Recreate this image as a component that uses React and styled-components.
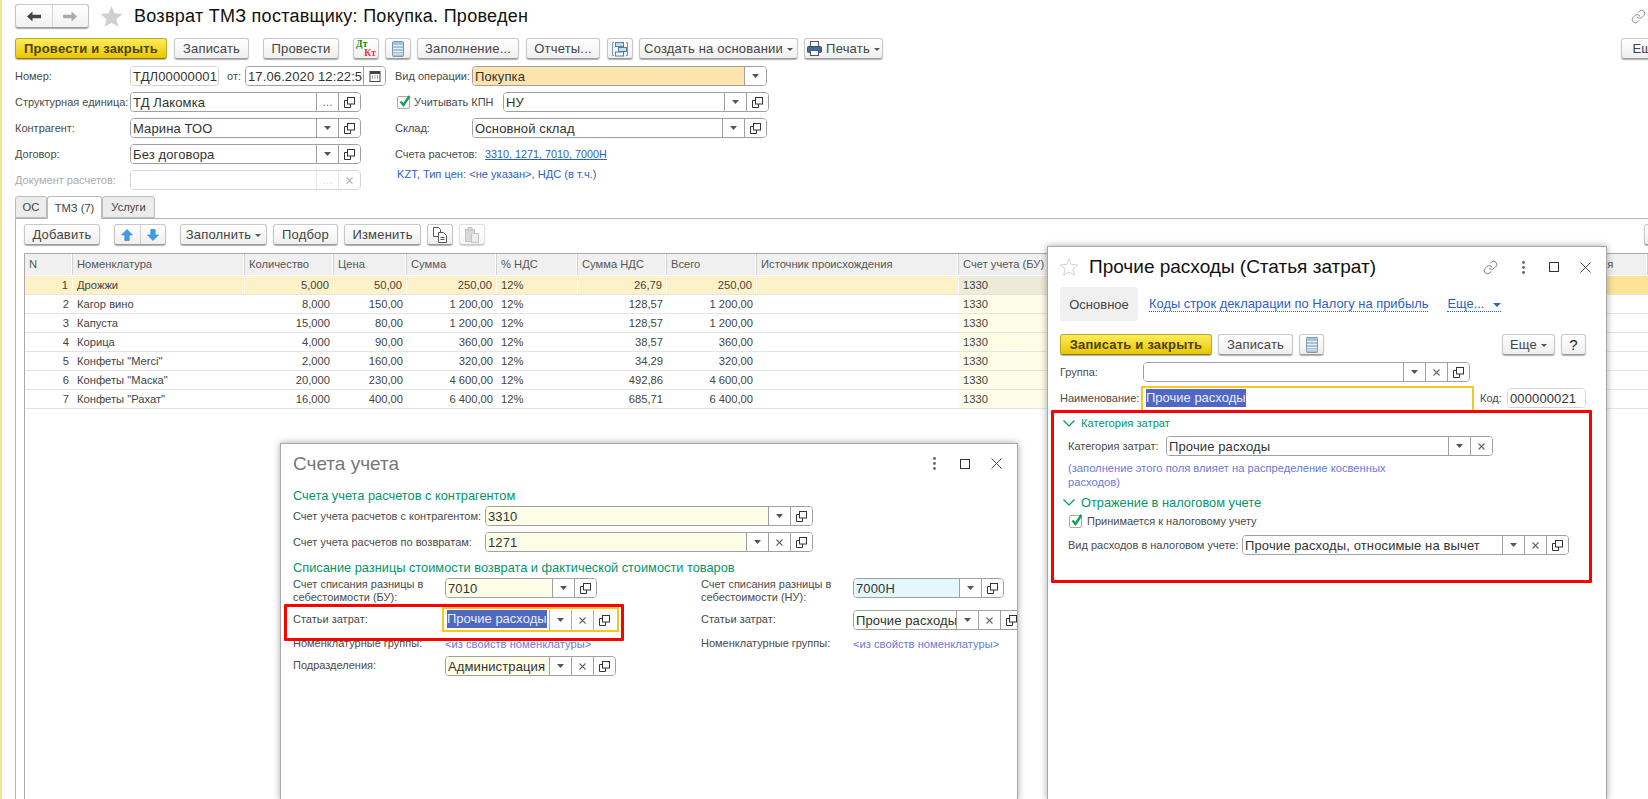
import React from 'react';
import styled, { createGlobalStyle } from 'styled-components';
import { Link as LinkIcon } from 'lucide-react';

const Global = createGlobalStyle`
html,body{margin:0;padding:0;background:#fff;}
body{font-family:"Liberation Sans",Arial,sans-serif;font-size:11.2px;color:#4a4a4a;overflow:hidden;}
`
const Page = styled.div`
position:relative;
width:1648px;
height:799px;
overflow:hidden;
box-sizing:border-box;
border-left:2px solid #f6e58e;
padding-left:13px;
display:flex;
flex-direction:column;
`
const TitleRow = styled.div`
display:flex;
align-items:center;
height:24px;
margin-top:4px;
`
const NavGroup = styled.div`
display:flex;
width:74px;
height:24px;
box-sizing:border-box;
border:1px solid #c6c6c6;
border-bottom-color:#9c9c9c;
border-radius:3px;
background:linear-gradient(#fff,#f1f1f1);
box-shadow:0 1px 1px #aaa;
`
const NavBtn = styled.div`
flex:1;
display:flex;
align-items:center;
justify-content:center;
& + &{border-left:1px solid #d6d6d6;}
`
const StarSlot = styled.div`
display:flex;
margin-left:11px;
`
const Title = styled.div`
font-size:18px;
letter-spacing:.27px;
color:#111;
margin-left:11px;
white-space:nowrap;
`
const CornerLink = styled.div`
margin-left:auto;
margin-right:2px;
display:flex;
color:#666;
`
const Toolbar = styled.div`
display:flex;
align-items:center;
height:21px;
margin-top:${p => p.$mt || 0}px;
flex:none;
`
const Button = styled.div`
flex:none;
box-sizing:border-box;
width:${p => p.$w}px;
height:21px;
margin-left:${p => p.$ml || 0}px;
display:flex;
align-items:center;
justify-content:center;
gap:4px;
border:1px solid #c8c8c8;
border-bottom-color:#9a9a9a;
border-radius:3px;
background:linear-gradient(#fff,#efefef);
box-shadow:0 1px 1px #b0b0b0;
font-size:13px;
letter-spacing:.2px;
color:#444;
white-space:nowrap;
opacity:${p => p.$off ? .55 : 1};
`
const MainButton = styled(Button)`
background:linear-gradient(#ffec5c,#e8c600);
border-color:#c0a820;
border-bottom-color:#8c7a10;
font-weight:bold;
color:#4c4200;
`
const ArrowGroup = styled(Button)`
gap:0;
padding:0;
`
const ArrowCell = styled.div`
flex:1;
height:100%;
display:flex;
align-items:center;
justify-content:center;
& + &{border-left:1px solid #d0d0d0;}
`
const Caret = styled.span`
display:inline-block;
width:0;
height:0;
border-left:3px solid transparent;
border-right:3px solid transparent;
border-top:3px solid #555;
margin-top:1px;
`
const DtKt = styled.div`
position:relative;
width:20px;
height:17px;
font-family:"Liberation Serif",serif;
font-weight:bold;
font-size:9.5px;
line-height:9px;
color:#0f8a00;
span{display:block;color:#f03030;text-align:right;}
`
const Form = styled.div`
display:flex;
margin-top:7px;
flex:none;
`
const FormCol = styled.div`
display:flex;
flex-direction:column;
gap:6px;
width:${p => p.$w ? p.$w + 'px' : 'auto'};
`
const Row = styled.div`
display:flex;
align-items:center;
height:20px;
margin-top:${p => p.$mt || 0}px;
flex:none;
`
const Label = styled.div`
flex:none;
width:${p => p.$w ? p.$w + 'px' : 'auto'};
margin-left:${p => p.$ml || 0}px;
font-size:11px;
line-height:13px;
color:${p => p.$off ? '#aaa' : '#4a4a4a'};
white-space:nowrap;
`
const FieldBox = styled.div`
flex:none;
box-sizing:border-box;
width:${p => p.$w}px;
height:20px;
display:flex;
margin-left:${p => p.$ml || 0}px;
border:1px solid ${p => p.$light ? '#d4d4d4' : '#a0a0a0'};
border-radius:4px;
overflow:hidden;
background:#fff;
`
const FieldValue = styled.div`
flex:1;
min-width:0;
padding:1px 2px 0;
font-size:13px;
letter-spacing:.12px;
line-height:18px;
color:#333;
white-space:nowrap;
overflow:hidden;
background:${p => p.$bg || '#fff'};
`
const FieldBtn = styled.div`
flex:none;
width:21px;
display:flex;
align-items:center;
justify-content:center;
border-left:1px solid ${p => p.$light ? '#d4d4d4' : '#a0a0a0'};
font-size:12px;
line-height:18px;
color:${p => p.$light ? '#bbb' : '#777'};
background:#fff;
opacity:${p => p.$light ? .5 : 1};
`
const Focus = styled.div`
flex:none;
box-sizing:border-box;
border:2px solid #fbc51f;
width:${p => p.$w}px;
height:${p => p.$h}px;
margin:${p => p.$m};
padding:1px 2px 0 3px;
display:flex;
font-size:13px;
line-height:18px;
color:#333;
background:#fff;
`
const Selected = styled.span`
background:#5068c0;
color:#e8ecff;
height:18px;
white-space:nowrap;
`
const FocusSpacer = styled.div`
flex:1;
`
const FocusBtn = styled(FieldBtn)`
border-left:1px solid #b0b0b0;
`
const TextLink = styled.a`
color:#2a60c8;
text-decoration:underline;
font-size:10.8px;
margin-left:${p => p.$ml || 0}px;
white-space:nowrap;
`
const BlueText = styled.div`
color:#3060c8;
font-size:11.1px;
margin-left:${p => p.$ml || 0}px;
white-space:nowrap;
`
const CheckBox = styled.div`
flex:none;
box-sizing:border-box;
width:13px;
height:13px;
border:1px solid #aaa;
border-radius:2px;
margin-left:${p => p.$ml || 0}px;
position:relative;
svg{position:absolute;left:0;top:-3px;}
`
const Tabs = styled.div`
display:flex;
margin-top:6px;
height:22px;
flex:none;
position:relative;
z-index:1;
`
const Tab = styled.div`
box-sizing:border-box;
width:${p => p.$w}px;
height:${p => p.$active ? 23 : 22}px;
display:flex;
align-items:center;
justify-content:center;
border:1px solid #bcbcbc;
border-bottom:${p => p.$active ? 'none' : '1px solid #bcbcbc'};
border-radius:3px 3px 0 0;
background:${p => p.$active ? '#fff' : '#ececec'};
font-size:11.2px;
color:#444;
`
const Panel = styled.div`
flex:1;
min-height:0;
display:flex;
flex-direction:column;
border-top:1px solid #b4b4b4;
border-left:1px solid #b4b4b4;
padding:5px 0 0 8px;
`
const TableBox = styled.div`
flex:1;
width:1640px;
margin-top:8px;
border-top:1px solid #aaa;
border-left:1px solid #aaa;
`
const GRID = '48px 172px 89px 73px 90px 81px 89px 90px 202px 569px 120px';
const HeadRow = styled.div`
display:grid;
grid-template-columns:${GRID};
height:21px;
border-bottom:1px solid #fff;
background:#f0f0f0;
`
const HeadCell = styled.div`
box-sizing:border-box;
padding:0 4px;
line-height:20px;
border-right:1px solid #d2d2d2;
box-shadow:inset -1px 0 0 #fff;
color:#555;
overflow:hidden;
white-space:nowrap;
`
const DataRow = styled.div`
display:grid;
grid-template-columns:${GRID};
height:19px;
box-sizing:border-box;
border-bottom:1px solid #e4e4e4;
`
const Cell = styled.div`
box-sizing:border-box;
padding:0 4px;
line-height:18px;
text-align:${p => p.$right ? 'right' : 'left'};
color:#444;
background:${p => p.$bg || 'transparent'};
border-right:${p => p.$active ? '1px solid #fff' : 'none'};
white-space:nowrap;
overflow:hidden;
`
const Dialog = styled.div`
position:absolute;
left:${p => p.$x}px;
top:${p => p.$y}px;
width:${p => p.$w}px;
height:${p => p.$h}px;
box-sizing:border-box;
border:1px solid #a8a8a8;
background:#fff;
box-shadow:0 0 7px rgba(0,0,0,.35);
overflow:hidden;
padding-left:12px;
z-index:2;
`
const WinHead = styled.div`
display:flex;
align-items:center;
box-sizing:border-box;
height:${p => p.$h}px;
padding:0 15px ${p => p.$pb || 0}px 0;
`
const WinTitle = styled.div`
font-size:19px;
color:${p => p.$muted ? '#777' : '#111'};
margin-left:${p => p.$ml || 0}px;
white-space:nowrap;
`
const WinTools = styled.div`
margin-left:auto;
display:flex;
align-items:center;
gap:21px;
color:#555;
`
const GreenHead = styled.div`
display:flex;
align-items:center;
gap:6px;
height:16px;
color:#00966a;
font-size:${p => p.$size || 12.8}px;
margin-top:${p => p.$mt || 0}px;
margin-left:${p => p.$ml || 0}px;
white-space:nowrap;
`
const AccGrid = styled.div`
display:grid;
grid-template-columns:152px 256px 152px 1fr;
grid-template-rows:32px 24px 22px 20px;
margin-top:3px;
`
const GridLabel = styled.div`
font-size:11px;
line-height:13px;
color:#4a4a4a;
white-space:nowrap;
padding-top:${p => p.$pt || 0}px;
`
const GridCell = styled.div`
grid-column:${p => p.$col};
display:flex;
align-items:flex-start;
`
const NoteLink = styled.div`
color:#6a78dc;
font-size:11.2px;
line-height:14px;
white-space:nowrap;
padding-top:${p => p.$pt || 0}px;
`
const NoteBlock = styled.div`
margin:5px 0 0 8px;
color:#6a78dc;
font-size:11.2px;
line-height:14px;
white-space:nowrap;
`
const CheckRow = styled.div`
display:flex;
align-items:center;
height:14px;
margin:4px 0 0 9px;
`
const RedBox = styled.div`
position:absolute;
left:${p => p.$x}px;
top:${p => p.$y}px;
width:${p => p.$w}px;
height:${p => p.$h}px;
box-sizing:border-box;
border:3px solid #fe0000;
border-radius:1px;
pointer-events:none;
`
const NavTabs = styled.div`
display:flex;
align-items:center;
height:34px;
`
const ActiveSection = styled.div`
width:78px;
height:34px;
display:flex;
align-items:center;
justify-content:center;
background:#f0f0f0;
border-radius:3px;
font-size:13px;
color:#444;
`
const DottedLink = styled.div`
color:#2a60c8;
font-size:12.9px;
border-bottom:1px dotted #2a60c8;
margin-left:${p => p.$ml}px;
white-space:nowrap;
line-height:15px;
`
const NavCaret = styled.span`
display:inline-block;
margin:0 0 1px ${p => p.$ml}px;
width:0;
height:0;
border-left:4px solid transparent;
border-right:4px solid transparent;
border-top:4px solid #2a60c8;
`
const QuestionMark = styled.span`
font-size:15px;
color:#222;
`

const DropIcon = () => <svg width="7" height="4"><polygon points="0,0 7,0 3.5,4" fill="#555" /></svg>
const ClearIcon = () => <svg width="7" height="7"><path d="M.5.5l6 6M6.5.5l-6 6" stroke="#666" strokeWidth="1.1" fill="none" /></svg>
const OpenIcon = () => <svg width="11" height="11" viewBox="0 0 11 11" fill="none" stroke="#333"><rect x="3.5" y=".5" width="7" height="6.5" /><path d="M3.5 3.5H.5v7h6V7" /></svg>
const CalIcon = () => <svg width="12" height="12" viewBox="0 0 12 12"><rect x="1" y="1.5" width="10" height="10" fill="none" stroke="#444" /><rect x="1" y="1.5" width="10" height="2.5" fill="#444" /><path d="M3 6h1M5.5 6h1M8 6h1M3 8h1M5.5 8h1M8 8h1" stroke="#444" /></svg>

const BUTTONS = { d: <DropIcon />, x: <ClearIcon />, o: <OpenIcon />, c: <CalIcon />, m: '...' };

const Field = ({ w, ml, bg, value, btns = '', light }) => (
    <FieldBox $w={w} $ml={ml} $light={light}>
        <FieldValue $bg={bg}>{value}</FieldValue>
        {btns.split('').map((b, i) => <FieldBtn key={i} $light={light}>{BUTTONS[b]}</FieldBtn>)}
    </FieldBox>
)

const Check = ({ ml }) => (
    <CheckBox $ml={ml}>
        <svg width="14" height="14" viewBox="0 0 14 14"><path d="M2.5 7.5l3 3.5L11.5 2" stroke="#12a05a" strokeWidth="2.4" fill="none" /></svg>
    </CheckBox>
)
const Chevron = () => <svg width="12" height="7" viewBox="0 0 12 7"><path d="M.5.5L6 6 11.5.5" stroke="#00966a" strokeWidth="1.2" fill="none" /></svg>
const ListIcon = () => (
    <svg width="12" height="16" viewBox="0 0 12 16">
        <rect x=".5" y=".5" width="11" height="15" rx="1" fill="#a9c2d6" stroke="#7d98ad" />
        <path d="M1 4.5h10M1 7.5h10M1 10.5h10M1 13h10" stroke="#e8f0f6" />
    </svg>
)
const StructIcon = () => (
    <svg width="16" height="16" viewBox="0 0 16 16" fill="none">
        <path d="M2 1.5H.5v13H2M14 1.5h1.5v13H14" stroke="#6c9ac0" />
        <rect x="3.5" y="1.5" width="8" height="4" fill="#c9dcec" stroke="#54819f" />
        <rect x="6.5" y="6.5" width="8" height="4" fill="#c9dcec" stroke="#54819f" />
        <rect x="3.5" y="11" width="8" height="4" fill="#fff" stroke="#54819f" />
    </svg>
)
const PrintIcon = () => (
    <svg width="15" height="15" viewBox="0 0 15 15">
        <rect x="3.5" y=".5" width="8" height="6" fill="#fff" stroke="#556" />
        <rect x=".5" y="5.5" width="14" height="6" rx="1" fill="#3f6f9c" stroke="#2c4e70" />
        <rect x="3.5" y="9.5" width="8" height="5" fill="#fff" stroke="#556" />
    </svg>
)
const ArrowV = ({ down }) => (
    <svg width="12" height="12" viewBox="0 0 12 12" transform={down ? 'rotate(180)' : undefined}>
        <path d="M6 .5L11.5 6H8.2V11.5H3.8V6H.5Z" fill="#3a9de6" stroke="#2d86c8" strokeWidth=".6" />
    </svg>
)
const ArrowH = ({ right, color }) => (
    <svg width="14" height="11" viewBox="0 0 14 11" transform={right ? 'scale(-1 1)' : undefined}>
        <path d="M0 5.5L5.5 .5V3.8H14V7.2H5.5V10.5Z" fill={color} />
    </svg>
)
const CopyIcon = () => (
    <svg width="16" height="16" viewBox="0 0 16 16" fill="#fff" stroke="#555">
        <path d="M1.5 .5h5l2 2v7h-7z" />
        <path d="M6.5 5.5h5l3 3v7h-8z" />
        <path d="M8.5 10.5h4M8.5 12.5h4" />
    </svg>
)
const PasteIcon = () => (
    <svg width="16" height="16" viewBox="0 0 16 16" fill="#bbb" stroke="#999">
        <rect x="1.5" y="2.5" width="9" height="12" />
        <rect x="4" y=".5" width="4" height="3" />
        <rect x="7.5" y="6.5" width="7" height="9" fill="#ddd" />
    </svg>
)
const Dots = () => <svg width="9" height="13" viewBox="-3 0 9 13" fill="#666"><circle cx="1.5" cy="1.5" r="1.4" /><circle cx="1.5" cy="6.5" r="1.4" /><circle cx="1.5" cy="11.5" r="1.4" /></svg>
const Square = () => <svg width="10" height="10" fill="none" stroke="#333"><rect x=".5" y=".5" width="9" height="9" /></svg>
const Cross = () => <svg width="11" height="11" fill="none" stroke="#444"><path d="M.5.5l10 10M10.5.5l-10 10" /></svg>
const Star = ({ size, fill, stroke }) => (
    <svg width={size} height={size} viewBox="0 0 24 24">
        <path d="M12 1l3.2 7.6 8.3.7-6.3 5.4 1.9 8.1L12 18.5 4.9 22.8l1.9-8.1L.5 9.3l8.3-.7z" fill={fill} stroke={stroke} />
    </svg>
)

const ROWS = [
    ['1', 'Дрожжи', '5,000', '50,00', '250,00', '12%', '26,79', '250,00'],
    ['2', 'Кагор вино', '8,000', '150,00', '1 200,00', '12%', '128,57', '1 200,00'],
    ['3', 'Капуста', '15,000', '80,00', '1 200,00', '12%', '128,57', '1 200,00'],
    ['4', 'Корица', '4,000', '90,00', '360,00', '12%', '38,57', '360,00'],
    ['5', 'Конфеты "Merci"', '2,000', '160,00', '320,00', '12%', '34,29', '320,00'],
    ['6', 'Конфеты "Маска"', '20,000', '230,00', '4 600,00', '12%', '492,86', '4 600,00'],
    ['7', 'Конфеты "Рахат"', '16,000', '400,00', '6 400,00', '12%', '685,71', '6 400,00'],
];
const HEADS = ['N', 'Номенклатура', 'Количество', 'Цена', 'Сумма', '% НДС', 'Сумма НДС', 'Всего', 'Источник происхождения', 'Счет учета (БУ)', 'Подразделения'];
const LEFT_COLS = [1, 5];

const App = () => {
    return (<>
        <Global />
        <Page>
            <TitleRow>
                <NavGroup>
                    <NavBtn><ArrowH color="#444" /></NavBtn>
                    <NavBtn><ArrowH right color="#aaa" /></NavBtn>
                </NavGroup>
                <StarSlot><Star size={23} fill="#d0d0d0" stroke="none" /></StarSlot>
                <Title>Возврат ТМЗ поставщику: Покупка. Проведен</Title>
                <CornerLink><LinkIcon size={15} strokeWidth={1.2} /></CornerLink>
            </TitleRow>
            <Toolbar $mt={10}>
                <MainButton $w={152}>Провести и закрыть</MainButton>
                <Button $w={75} $ml={7}>Записать</Button>
                <Button $w={76} $ml={14}>Провести</Button>
                <Button $w={26} $ml={14}><DtKt>Дт<span>Кт</span></DtKt></Button>
                <Button $w={26} $ml={6}><ListIcon /></Button>
                <Button $w={102} $ml={6}>Заполнение...</Button>
                <Button $w={74} $ml={7}>Отчеты...</Button>
                <Button $w={26} $ml={7}><StructIcon /></Button>
                <Button $w={159} $ml={6}>Создать на основании <Caret /></Button>
                <Button $w={79} $ml={6}><PrintIcon />Печать <Caret /></Button>
                <Button $w={60} $ml={738}>Еще <Caret /></Button>
            </Toolbar>
            <Form>
                <FormCol $w={380}>
                    <Row>
                        <Label $w={115}>Номер:</Label>
                        <Field w={89} value="ТДЛ00000001" light />
                        <Label $ml={8} $w={18}>от:</Label>
                        <Field w={141} value="17.06.2020 12:22:56" btns="c" />
                    </Row>
                    <Row><Label $w={115}>Структурная единица:</Label><Field w={231} value="ТД Лакомка" btns="mo" /></Row>
                    <Row><Label $w={115}>Контрагент:</Label><Field w={231} value="Марина ТОО" btns="do" /></Row>
                    <Row><Label $w={115}>Договор:</Label><Field w={231} value="Без договора" btns="do" /></Row>
                    <Row><Label $w={115} $off>Документ расчетов:</Label><Field w={231} value="" btns="mx" light /></Row>
                </FormCol>
                <FormCol>
                    <Row><Label $w={77}>Вид операции:</Label><Field w={295} value="Покупка" bg="#fde4ae" btns="d" /></Row>
                    <Row>
                        <Check ml={2} />
                        <Label $ml={4} $w={89}>Учитывать КПН</Label>
                        <Field w={266} value="НУ" btns="do" />
                    </Row>
                    <Row><Label $w={77}>Склад:</Label><Field w={295} value="Основной склад" btns="do" /></Row>
                    <Row><Label $w={90}>Счета расчетов:</Label><TextLink>3310, 1271, 7010, 7000Н</TextLink></Row>
                    <Row $mt={-6}><BlueText $ml={2}>KZT, Тип цен: &lt;не указан&gt;, НДС (в т.ч.)</BlueText></Row>
                </FormCol>
            </Form>
            <Tabs>
                <Tab $w={32}>ОС</Tab>
                <Tab $w={55} $active>ТМЗ (7)</Tab>
                <Tab $w={53}>Услуги</Tab>
            </Tabs>
            <Panel>
                <Toolbar>
                    <Button $w={76}>Добавить</Button>
                    <ArrowGroup $w={52} $ml={14}>
                        <ArrowCell><ArrowV /></ArrowCell>
                        <ArrowCell><ArrowV down /></ArrowCell>
                    </ArrowGroup>
                    <Button $w={87} $ml={14}>Заполнить <Caret /></Button>
                    <Button $w={65} $ml={6}>Подбор</Button>
                    <Button $w={77} $ml={6}>Изменить</Button>
                    <Button $w={26} $ml={6}><CopyIcon /></Button>
                    <Button $w={26} $ml={6} $off><PasteIcon /></Button>
                    <Button $w={40} $ml={1159} />
                </Toolbar>
                <TableBox>
                    <HeadRow>
                        {HEADS.map((h) => <HeadCell key={h}>{h}</HeadCell>)}
                    </HeadRow>
                    {ROWS.map((row, r) => {
                        const first = r === 0;
                        return (
                            <DataRow key={row[0]}>
                                {row.map((c, i) => (
                                    <Cell key={i} $right={!LEFT_COLS.includes(i)} $active={first} $bg={first ? '#fdf1c7' : undefined}>{c}</Cell>
                                ))}
                                <Cell $active={first} $bg={first ? '#fdf1c7' : undefined} />
                                <Cell $bg={first ? '#eeead8' : '#fefde8'}>1330</Cell>
                                <Cell $bg={first ? '#fde395' : undefined} />
                            </DataRow>
                        )
                    })}
                </TableBox>
            </Panel>

            <Dialog $x={278} $y={443} $w={738} $h={357}>
                <WinHead $h={43} $pb={4}>
                    <WinTitle $muted>Счета учета</WinTitle>
                    <WinTools><Dots /><Square /><Cross /></WinTools>
                </WinHead>
                <GreenHead>Счета учета расчетов с контрагентом</GreenHead>
                <Row $mt={3}><Label $w={192}>Счет учета расчетов с контрагентом:</Label><Field w={328} value="3310" bg="#fefde8" btns="do" /></Row>
                <Row $mt={6}><Label $w={192}>Счет учета расчетов по возвратам:</Label><Field w={328} value="1271" bg="#fefde8" btns="dxo" /></Row>
                <GreenHead $mt={7}>Списание разницы стоимости возврата и фактической стоимости товаров</GreenHead>
                <AccGrid>
                    <GridLabel>Счет списания разницы в<br />себестоимости (БУ):</GridLabel>
                    <GridCell $col={2}><Field w={152} value="7010" bg="#fefde8" btns="do" /></GridCell>
                    <GridLabel>Счет списания разницы в<br />себестоимости (НУ):</GridLabel>
                    <GridCell $col={4}><Field w={151} value="7000Н" bg="#e4f7fd" btns="do" /></GridCell>

                    <GridLabel $pt={3}>Статьи затрат:</GridLabel>
                    <GridCell $col={2}>
                        <Focus $w={177} $h={25} $m="-3px 0 0 -3px">
                            <Selected>Прочие расходы</Selected>
                            <FocusSpacer />
                            <FocusBtn><DropIcon /></FocusBtn>
                            <FocusBtn><ClearIcon /></FocusBtn>
                            <FocusBtn><OpenIcon /></FocusBtn>
                        </Focus>
                    </GridCell>
                    <GridLabel $pt={3}>Статьи затрат:</GridLabel>
                    <GridCell $col={4}><Field w={170} value="Прочие расходы" bg="#fbfefa" btns="dxo" /></GridCell>

                    <GridLabel $pt={3}>Номенклатурные группы:</GridLabel>
                    <GridCell $col={2}><NoteLink $pt={3}>&lt;из свойств номенклатуры&gt;</NoteLink></GridCell>
                    <GridLabel $pt={3}>Номенклатурные группы:</GridLabel>
                    <GridCell $col={4}><NoteLink $pt={3}>&lt;из свойств номенклатуры&gt;</NoteLink></GridCell>

                    <GridLabel $pt={3}>Подразделения:</GridLabel>
                    <GridCell $col={2}><Field w={171} value="Администрация" bg="#fefde8" btns="dxo" /></GridCell>
                </AccGrid>
                <RedBox $x={3} $y={160} $w={340} $h={37} />
            </Dialog>

            <Dialog $x={1045} $y={246} $w={560} $h={554}>
                <WinHead $h={40}>
                    <Star size={18} fill="#fff" stroke="#c4c4c4" />
                    <WinTitle $ml={11}>Прочие расходы (Статья затрат)</WinTitle>
                    <WinTools><LinkIcon size={15} strokeWidth={1.2} /><Dots /><Square /><Cross /></WinTools>
                </WinHead>
                <NavTabs>
                    <ActiveSection>Основное</ActiveSection>
                    <DottedLink $ml={11}>Коды строк декларации по Налогу на прибыль</DottedLink>
                    <DottedLink $ml={19}>Еще...<NavCaret $ml={9} /></DottedLink>
                </NavTabs>
                <Toolbar $mt={13}>
                    <MainButton $w={152}>Записать и закрыть</MainButton>
                    <Button $w={75} $ml={6}>Записать</Button>
                    <Button $w={25} $ml={6}><ListIcon /></Button>
                    <Button $w={53} $ml={178}>Еще <Caret /></Button>
                    <Button $w={25} $ml={6}><QuestionMark>?</QuestionMark></Button>
                </Toolbar>
                <Row $mt={7}><Label $w={83}>Группа:</Label><Field w={327} value="" btns="dxo" /></Row>
                <Row $mt={6}>
                    <Label $w={81}>Наименование:</Label>
                    <Focus $w={333} $h={26} $m="-2px 0 -4px 0"><Selected>Прочие расходы</Selected></Focus>
                    <Label $ml={6} $w={27}>Код:</Label>
                    <Field w={79} value="000000021" light />
                </Row>
                <GreenHead $size={11.2} $mt={7} $ml={3}><Chevron />Категория затрат</GreenHead>
                <Row $mt={5}><Label $ml={8} $w={98}>Категория затрат:</Label><Field w={327} value="Прочие расходы" btns="dx" /></Row>
                <NoteBlock>(заполнение этого поля влияет на распределение косвенных<br />расходов)</NoteBlock>
                <GreenHead $mt={5} $ml={3}><Chevron />Отражение в налоговом учете</GreenHead>
                <CheckRow><Check /><Label $ml={5}>Принимается к налоговому учету</Label></CheckRow>
                <Row $mt={7}><Label $ml={8} $w={174}>Вид расходов в налоговом учете:</Label><Field w={327} value="Прочие расходы, относимые на вычет" btns="dxo" /></Row>
                <RedBox $x={3} $y={163} $w={541} $h={173} />
            </Dialog>
        </Page>
    </>
    )
}

export default App;
